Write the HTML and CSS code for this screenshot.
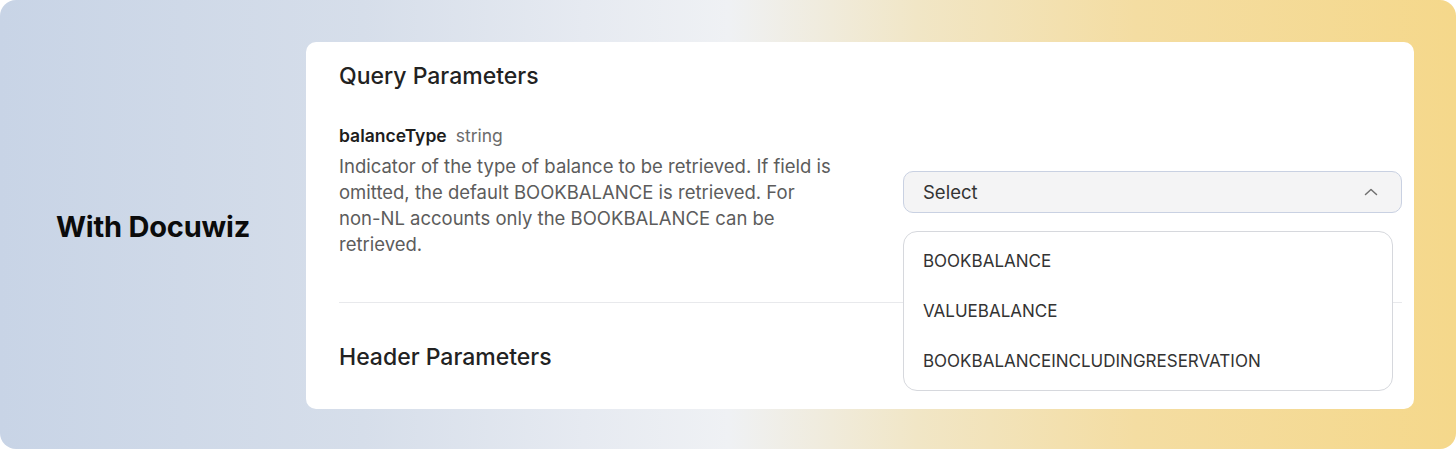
FILE: index.html
```html
<!DOCTYPE html>
<html lang="en">
<head>
<meta charset="utf-8">
<title>With Docuwiz</title>
<link rel="stylesheet" href="styles.css">
</head>
<body>
<div class="frame">
  <div class="label-col">
    <div class="label">With Docuwiz</div>
  </div>
  <div class="card">
    <h2 class="section-title">Query Parameters</h2>
    <div class="param-row">
      <div class="param-info">
        <div class="param-head"><span class="param-name">balanceType</span><span class="param-type">string</span></div>
        <p class="param-desc">Indicator of the type of balance to be retrieved. If field is omitted, the default BOOKBALANCE is retrieved. For non-&#8288;NL accounts only the BOOKBALANCE can be retrieved.</p>
      </div>
      <div class="select-wrap">
        <div class="select">
          <span class="select-text">Select</span>
          <svg class="chevron" width="16" height="10" viewBox="0 0 16 10"><path d="M2.5 7.5 L8 2.5 L13.5 7.5" fill="none" stroke="#707070" stroke-width="1.5" stroke-linecap="round" stroke-linejoin="round"/></svg>
        </div>
        <ul class="dropdown">
          <li class="option">BOOKBALANCE</li>
          <li class="option">VALUEBALANCE</li>
          <li class="option">BOOKBALANCEINCLUDINGRESERVATION</li>
        </ul>
      </div>
    </div>
    <div class="divider"></div>
    <h2 class="section-title header-title">Header Parameters</h2>
  </div>
</div>
</body>
</html>
```

FILE: styles.css
```css
* { box-sizing: border-box; }
html, body { margin: 0; padding: 0; background: #ffffff; }
body { font-family: Inter, "Noto Sans", sans-serif; }

.frame {
  width: 1456px;
  height: 449px;
  border-radius: 16px;
  background: linear-gradient(90deg, #c8d4e6 0%, #d6deea 25%, #e6eaf1 40%, #eff1f4 50%, #f1e6c6 63%, #f4dda2 78%, #f5d88b 100%);
  display: flex;
  align-items: flex-start;
}

.label-col {
  width: 306px;
  height: 449px;
  display: flex;
  align-items: center;
  justify-content: center;
  padding-top: 4px;
}
.label {
  font-size: 29px;
  font-weight: 700;
  color: #0b0b0b;
  letter-spacing: -0.2px;
}

.card {
  margin-top: 42px;
  width: 1108px;
  height: 367px;
  background: #ffffff;
  border-radius: 10px;
  padding: 19px 12px 0 33px;
}

.section-title {
  margin: 0;
  font-size: 23px;
  line-height: 30px;
  font-weight: 500;
  color: #222222;
}

.param-row {
  margin-top: 33px;
  display: grid;
  grid-template-columns: 1fr 499px;
  column-gap: 20px;
}
.param-info { max-width: 500px; }
.param-head {
  font-size: 17.5px;
  line-height: 24px;
  display: flex;
  gap: 9px;
}
.param-name { font-weight: 600; color: #1d1d1d; }
.param-type { color: #6b6b6b; }
.param-desc {
  margin: 5px 0 0 0;
  font-size: 18.5px;
  line-height: 26px;
  color: #5c5c5c;
}

.select-wrap {
  position: relative;
  padding-top: 47px;
}
.select {
  height: 42px;
  background: #f4f4f5;
  border: 1px solid #c9d1e2;
  border-radius: 10px;
  display: flex;
  align-items: center;
  justify-content: space-between;
  padding: 0 22px 0 19px;
}
.select-text { font-size: 18.5px; color: #333333; }
.chevron { display: block; }

.dropdown {
  position: absolute;
  left: 0;
  top: 107px;
  width: 490px;
  margin: 0;
  padding: 4px 0;
  list-style: none;
  background: #ffffff;
  border: 1px solid #d6d8dd;
  border-radius: 14px;
  z-index: 2;
}
.option {
  height: 50px;
  display: flex;
  align-items: center;
  padding-left: 19px;
  font-size: 17px;
  color: #333333;
}

.divider {
  margin-top: 45px;
  height: 1px;
  background: #e8e9ec;
}
.header-title { margin-top: 39px; }
```
